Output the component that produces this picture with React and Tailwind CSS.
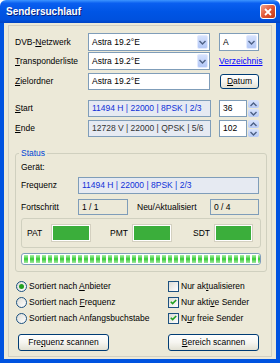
import React from "react";

const FONT = "font-['Liberation_Sans',Arial,sans-serif]";

function Chevron({ up }) {
  return (
    <svg width="7" height="5" viewBox="0 0 7 5">
      <path d={up ? "M0.5 4 L3.5 1 L6.5 4" : "M0.5 1 L3.5 4 L6.5 1"} fill="none" stroke="#4D6185" strokeWidth="1.4" />
    </svg>
  );
}

function Combo({ text, w }) {
  return (
    <div className={`flex h-[18px] items-center border border-[#7F9DB9] bg-white ${w}`}>
      <span className="flex-1 truncate pl-[3px] text-black">{text}</span>
      <span className="m-px flex h-[14px] w-[11px] items-center justify-center rounded-[2px] border border-[#E2EAFE] bg-gradient-to-b from-[#D5E1FC] to-[#B2C7F6]">
        <Chevron />
      </span>
    </div>
  );
}

function Spin({ value }) {
  return (
    <div className="flex h-[17px]">
      <div className="flex w-[28px] items-center border border-[#7F9DB9] bg-white pl-[3px]">{value}</div>
      <div className="ml-px flex w-[11px] flex-col gap-px">
        <span className="flex flex-1 items-center justify-center rounded-[2px] bg-gradient-to-b from-[#D8E3FC] to-[#B6CAF5]"><Chevron up /></span>
        <span className="flex flex-1 items-center justify-center rounded-[2px] bg-gradient-to-b from-[#D8E3FC] to-[#B6CAF5]"><Chevron /></span>
      </div>
    </div>
  );
}

function Button({ children, w }) {
  return (
    <div className={`flex h-[17px] items-center justify-center rounded-[3px] border border-[#003C74] bg-gradient-to-b from-white via-[#F6F5F0] to-[#E3E1D4] text-black ${w}`}>
      {children}
    </div>
  );
}

function Radio({ on, children }) {
  return (
    <div className="flex h-[16px] items-center">
      <span className="flex h-[11px] w-[11px] items-center justify-center rounded-full border border-[#1C5180] bg-gradient-to-br from-[#DCDCD7] to-white">
        {on && <span className="h-[5px] w-[5px] rounded-full bg-[#21A121]" />}
      </span>
      <span className="ml-[2px]">{children}</span>
    </div>
  );
}

function Check({ on, children }) {
  return (
    <div className="flex h-[16px] items-center">
      <span className="flex h-[11px] w-[11px] items-center justify-center border border-[#1C5180] bg-gradient-to-br from-[#DCDCD7] to-white">
        {on && (
          <svg width="7" height="6" viewBox="0 0 7 6">
            <path d="M0.8 2.8 L2.6 4.6 L6.2 1" fill="none" stroke="#21A121" strokeWidth="1.6" />
          </svg>
        )}
      </span>
      <span className="ml-[2px]">{children}</span>
    </div>
  );
}

const Green = ({ w }) => (
  <span className={`h-[16px] border border-white bg-[#3BAE3B] shadow-[0_0_0_1px_#D4D0C0] ${w}`} />
);

export default function App() {
  const segs = Array.from({ length: 40 });
  return (
    <div className={`flex h-[363px] w-[280px] flex-col overflow-hidden text-[8.5px] leading-none text-black ${FONT}`}>
      <div className="flex h-[23px] items-center justify-between rounded-t-[6px] bg-[linear-gradient(180deg,#3D95FF_0%,#0A5FF0_14%,#0055E5_50%,#0051DE_85%,#0043C4_100%)] pl-[6px] pr-[4px]">
        <span className="text-[10px] font-bold text-white [text-shadow:1px_1px_#0A1F7D]">Sendersuchlauf</span>
        <span className="flex h-[15px] w-[16px] items-center justify-center rounded-[3px] border border-white bg-gradient-to-br from-[#F3A28A] via-[#E15634] to-[#C43816]">
          <svg width="8" height="8" viewBox="0 0 8 8">
            <path d="M1 1 L7 7 M7 1 L1 7" stroke="white" strokeWidth="1.8" />
          </svg>
        </span>
      </div>

      <div className="flex flex-1 flex-col border-x-4 border-b-4 border-[#0053E0] bg-[#ECE9D8] pl-[4px] pr-[4px] pt-[2px] pb-[2px]">
        <div className="flex flex-1 flex-col border border-[#D3D0C2] pl-[6px] pr-[4px]">
          <div className="mt-[7px] flex h-[18px] items-center">
            <span className="w-[73px]">DVB-<u>N</u>etzwerk</span>
            <Combo text="Astra 19.2°E" w="w-[122px]" />
            <div className="ml-[9px]"><Combo text="A" w="w-[40px]" /></div>
          </div>
          <div className="mt-[1px] flex h-[18px] items-center">
            <span className="w-[73px]"><u>T</u>ransponderliste</span>
            <Combo text="Astra 19.2°E" w="w-[122px]" />
            <span className="ml-[9px] text-[#0000FF] underline">Verzeichnis</span>
          </div>
          <div className="mt-[3px] flex h-[17px] items-center">
            <span className="w-[73px]"><u>Z</u>ielordner</span>
            <div className="flex h-[17px] w-[122px] items-center border border-[#7F9DB9] bg-white pl-[3px]">Astra 19.2°E</div>
            <div className="ml-[10px]"><Button w="w-[39px] !h-[15px]"><u>D</u>atum</Button></div>
          </div>
          <div className="mt-[10px] flex h-[17px] items-center">
            <span className="w-[73px]"><u>S</u>tart</span>
            <div className="flex h-[17px] w-[123px] items-center border border-[#7F9DB9] bg-[#E6EAF2] pl-[3px] text-[#1030D8]">11494 H | 22000 | 8PSK | 2/3</div>
            <div className="ml-[8px]"><Spin value="36" /></div>
          </div>
          <div className="mt-[3px] flex h-[17px] items-center">
            <span className="w-[73px]"><u>E</u>nde</span>
            <div className="flex h-[17px] w-[123px] items-center border border-[#7F9DB9] bg-[#E6EAF2] pl-[3px] text-[#333]">12728 V | 22000 | QPSK | 5/6</div>
            <div className="ml-[8px]"><Spin value="102" /></div>
          </div>

          <div className="relative mt-[16px] w-[252px] rounded-[3px] border border-[#D0D0BF] pl-[5px] pb-[6px]">
            <span className="absolute -top-[5px] left-[3px] bg-[#ECE9D8] px-[2px] text-[#0046D5]">Status</span>
            <div className="mt-[9px] h-[10px]">Gerät:</div>
            <div className="mt-[4px] flex h-[17px] items-center">
              <span className="w-[57px]">Frequenz</span>
              <div className="flex h-[17px] w-[181px] items-center border border-[#7F9DB9] bg-[#E6EAF2] pl-[3px] text-[#1030D8]">11494 H | 22000 | 8PSK | 2/3</div>
            </div>
            <div className="mt-[5px] flex h-[16px] items-center">
              <span className="w-[57px]">Fortschritt</span>
              <div className="flex h-[16px] w-[50px] items-center border border-[#7F9DB9] bg-[#ECE9D8] pl-[3px]">1 / 1</div>
              <span className="ml-[9px] w-[73px]">Neu/Aktualisiert</span>
              <div className="flex h-[16px] w-[49px] items-center border border-[#7F9DB9] bg-[#ECE9D8] pl-[3px]">0 / 4</div>
            </div>
            <div className="mt-[3px] flex h-[30px] w-[240px] items-center rounded-[3px] border border-[#D0D0BF] pl-[5px]">
              <span className="w-[25px]">PAT</span>
              <Green w="w-[38px]" />
              <span className="ml-[20px] w-[23px]">PMT</span>
              <Green w="w-[38px]" />
              <span className="ml-[22px] w-[22px]">SDT</span>
              <Green w="w-[37px]" />
            </div>
            <div className="mt-[5px] flex h-[12px] w-[240px] items-center gap-[2px] overflow-hidden rounded-[3px] border border-[#7F9DB9] bg-white px-[2px]">
              {segs.map((_, i) => (
                <span key={i} className="h-[8px] w-[4px] shrink-0 bg-gradient-to-b from-[#A8F0A8] via-[#2BCB2B] to-[#9EE89E]" />
              ))}
            </div>
          </div>

          <div className="mt-[6px] flex pl-[1px]">
            <div className="w-[152px]">
              <Radio on>Sortiert nach <u>A</u>nbieter</Radio>
              <Radio>Sortiert nach <u>F</u>requenz</Radio>
              <Radio>Sortiert nach Anfan<u>g</u>sbuchstabe</Radio>
            </div>
            <div>
              <Check>Nur ak<u>t</u>ualisieren</Check>
              <Check on>Nur akti<u>v</u>e Sender</Check>
              <Check on>N<u>u</u>r freie Sender</Check>
            </div>
          </div>

          <div className="mt-[8px] flex pl-[3px]">
            <Button w="w-[91px]">Fre<u>q</u>uenz scannen</Button>
            <div className="ml-[59px]"><Button w="w-[91px]"><u>B</u>ereich scannen</Button></div>
          </div>
        </div>
      </div>
    </div>
  );
}
